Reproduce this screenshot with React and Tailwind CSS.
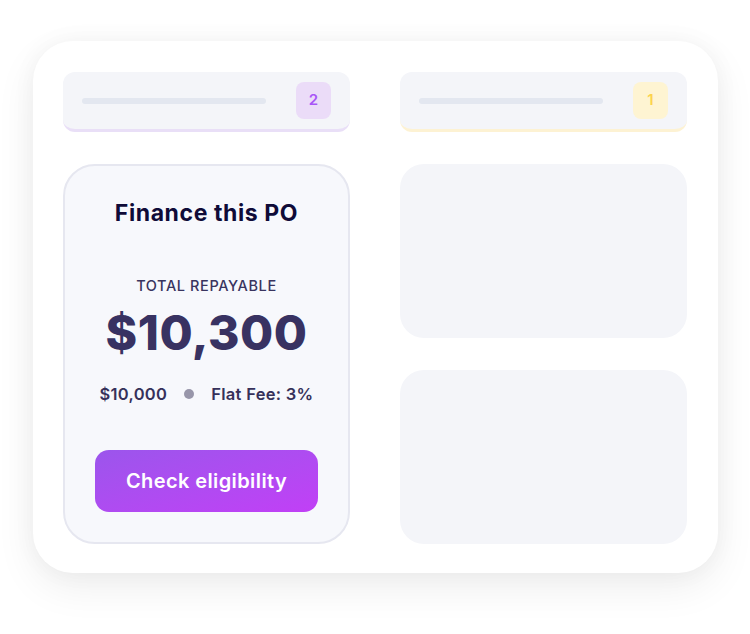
export default function App() {
  const font = { fontFamily: "Inter, 'Noto Sans', sans-serif" };
  return (
    <div className="w-[750px] h-[634px] bg-white pt-[41px] pl-[33px]" style={font}>
      <div className="w-[685px] h-[532px] bg-white rounded-[40px] shadow-[0_14px_40px_rgba(0,0,0,0.07),0_0_24px_rgba(0,0,0,0.04)] px-[30px] pt-[31px] pb-[29px] flex gap-[50px]">
        {/* left column */}
        <div className="w-[287px] flex flex-col gap-[32px]">
          <div className="h-[60px] rounded-[12px] bg-[#f4f5f9] border-b-[3px] border-[#e9dff7] flex items-center justify-between pl-[19px] pr-[19px]">
            <div className="w-[184px] h-[6px] rounded-full bg-[#e3e7f0]" />
            <div className="w-[35px] h-[37px] rounded-[8px] bg-[#ebdcf8] flex items-center justify-center text-[15px] font-semibold text-[#a855f7]">2</div>
          </div>
          <div className="h-[380px] rounded-[32px] border-2 border-[#e6e7f0] bg-[#f7f8fc] flex flex-col items-center">
            <div className="mt-[32px] text-[23px] leading-[30px] font-bold text-[#0f0b38] tracking-[0.6px]">Finance this PO</div>
            <div className="mt-[49px] text-[14.5px] leading-[18px] font-medium text-[#39345f] tracking-[0.6px]">TOTAL REPAYABLE</div>
            <div className="mt-[10px] text-[48px] leading-[56px] font-extrabold text-[#383262] tracking-[0.5px]">$10,300</div>
            <div className="mt-[23px] flex items-center text-[16.5px] leading-[20px] font-semibold text-[#36315a] tracking-[0.3px]">
              <span>$10,000</span>
              <span className="mx-[17px] w-[10px] h-[10px] rounded-full bg-[#9896aa]" />
              <span>Flat Fee: 3%</span>
            </div>
            <div className="mt-[46px] w-[223px] h-[62px] rounded-[14px] bg-gradient-to-br from-[#9b55ec] to-[#c13ff6] flex items-center justify-center text-white text-[20px] font-semibold tracking-[0.4px]">
              Check eligibility
            </div>
          </div>
        </div>
        {/* right column */}
        <div className="w-[287px] flex flex-col gap-[32px]">
          <div className="h-[60px] rounded-[12px] bg-[#f4f5f9] border-b-[3px] border-[#fdf2d3] flex items-center justify-between pl-[19px] pr-[19px]">
            <div className="w-[184px] h-[6px] rounded-full bg-[#e3e7f0]" />
            <div className="w-[35px] h-[37px] rounded-[8px] bg-[#fef4d2] flex items-center justify-center text-[15px] font-semibold text-[#fcd34d]">1</div>
          </div>
          <div className="h-[174px] rounded-[24px] bg-[#f4f5f9]" />
          <div className="h-[174px] rounded-[24px] bg-[#f4f5f9]" />
        </div>
      </div>
    </div>
  );
}
